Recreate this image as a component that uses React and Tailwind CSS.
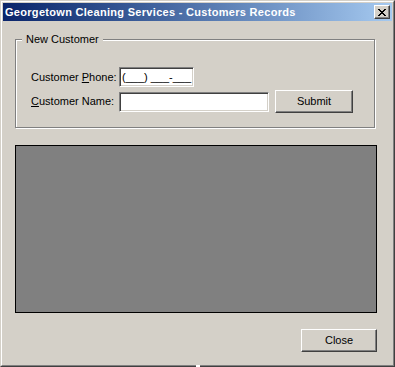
import React from 'react';

const font = { fontFamily: '"Liberation Sans", Arial, sans-serif' };

// Win2k style raised button
const Button = ({ children, className = '' }) => (
    <button
        type="button"
        className={
            'flex items-center justify-center bg-[#d4d0c8] text-[11px] text-black border border-t-white border-l-white border-r-[#404040] border-b-[#404040] shadow-[inset_-1px_-1px_0_#808080] ' +
            className
        }
    >
        {children}
    </button>
);

// sunken edit box
const Field = ({ className = '', children }) => (
    <div
        className={
            'h-[20px] bg-white border border-t-[#808080] border-l-[#808080] border-r-white border-b-white shadow-[inset_1px_1px_0_#404040,inset_-1px_-1px_0_#d4d0c8] flex items-center pl-[3px] text-[11px] text-black overflow-hidden whitespace-pre ' +
            className
        }
    >
        {children}
    </div>
);

export default function App() {
    return (
        <div style={font} className="relative w-[395px] h-[367px] bg-[#d4d0c8] border border-t-[#d4d0c8] border-l-[#d4d0c8] border-r-[#404040] border-b-[#404040]">
            <div className="h-full border border-t-white border-l-white border-r-[#808080] border-b-[#808080] p-[1px] flex flex-col">
                {/* title bar */}
                <div className="h-[18px] flex items-center justify-between bg-gradient-to-r from-[#0a246a] to-[#a6caf0] pl-[2px] pr-[2px]">
                    <span className="text-white font-bold text-[11px] leading-none tracking-[0.3px] whitespace-nowrap">
                        Georgetown Cleaning Services - Customers Records
                    </span>
                    <div className="w-[16px] h-[14px] bg-[#d4d0c8] border border-t-white border-l-white border-r-[#404040] border-b-[#404040] shadow-[inset_-1px_-1px_0_#808080] flex items-center justify-center">
                        <svg width="8" height="7" viewBox="0 0 8 7" shapeRendering="crispEdges">
                            <path d="M0 0h2v1H0zM6 0h2v1H6zM1 1h2v1H1zM5 1h2v1H5zM2 2h4v1H2zM3 3h2v1H3zM2 4h4v1H2zM1 5h2v1H1zM5 5h2v1H5zM0 6h2v1H0zM6 6h2v1H6z" fill="#000" />
                        </svg>
                    </div>
                </div>

                {/* group box */}
                <div className="relative ml-[12px] mt-[18px] w-[360px] h-[89px] border border-[#808080] shadow-[inset_1px_1px_0_white,1px_1px_0_white]">
                    <span className="absolute left-[6px] top-[-7px] px-[4px] bg-[#d4d0c8] text-[11px] leading-[13px] text-black">
                        New Customer
                    </span>
                    <div className="pl-[15px] pt-[27px] flex flex-col gap-[3px]">
                        <div className="flex items-center h-[20px]">
                            <span className="w-[88px] text-[11px] text-black whitespace-nowrap">
                                Customer <span className="underline">P</span>hone:
                            </span>
                            <Field className="w-[75px] !pl-[2px]">(___) ___-___</Field>
                        </div>
                        <div className="flex items-center h-[23px]">
                            <span className="w-[88px] text-[11px] text-black whitespace-nowrap">
                                <span className="underline">C</span>ustomer Name:
                            </span>
                            <Field className="w-[150px]" />
                            <Button className="ml-[6px] w-[78px] h-[23px]">Submit</Button>
                        </div>
                    </div>
                </div>

                {/* list area */}
                <div className="ml-[12px] mt-[17px] w-[362px] h-[168px] bg-[#808080] border border-black" />

                <div className="flex justify-end mt-[16px] pr-[15px]">
                    <Button className="w-[76px] h-[23px]">Close</Button>
                </div>
            </div>
            <span className="absolute left-[195px] bottom-[-1px] w-[4px] h-[2px] bg-white" />
        </div>
    );
}
